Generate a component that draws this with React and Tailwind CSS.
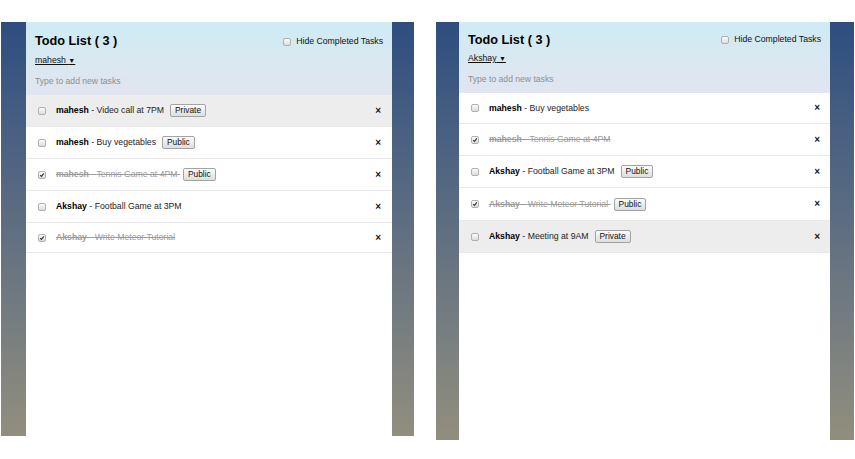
import React from "react";

function Box({ checked }) {
  return (
    <span className="inline-flex w-[8px] h-[8px] shrink-0 rounded-[2px] border border-[#b0b0b0] bg-linear-to-b from-[#fdfdfd] to-[#dcdcdc] items-center justify-center">
      {checked && (
        <svg width="8" height="8" viewBox="0 0 8 8" className="block">
          <path d="M1.6 4.2 L3.3 5.9 L6.4 1.8" fill="none" stroke="#333" strokeWidth="1.5" />
        </svg>
      )}
    </span>
  );
}

function Btn({ children }) {
  return (
    <span className="ml-[6px] inline-flex h-[13px] items-center px-[4px] rounded-[2px] border border-[#a3a3a3] bg-linear-to-b from-[#fbfbfb] to-[#dedede] text-[8.4px] leading-[11px] text-[#111]">
      {children}
    </span>
  );
}

function Row({ name, task, done, btn, gray, h, pr }) {
  return (
    <div
      className={
        "flex items-center border-b border-[#e9e9e9] pl-[12px] " +
        (gray ? "bg-[#ededed] " : "bg-white ")
      }
      style={{ height: h, paddingRight: pr }}
    >
      <Box checked={done} />
      <div className="ml-[10px] flex items-center flex-1 text-[8.7px] leading-[11px]">
        {done ? (
          <span className="text-[#9c9c9c] line-through decoration-[#9c9c9c]">
            <b className="font-bold">{name}</b> - {task}
            {btn ? "\u00a0" : ""}
          </span>
        ) : (
          <span className="text-[#1c1c1c]">
            <b className="font-bold text-black">{name}</b> - {task}
          </span>
        )}
        {btn && (done ? <span className="-ml-[3px]"><Btn>{btn}</Btn></span> : <Btn>{btn}</Btn>)}
      </div>
      <span className="text-[10px] leading-[10px] font-bold text-[#1a1a1a]">×</span>
    </div>
  );
}

function Panel({ user, rows, headerH, titleMt, userMt, hideMt, pr }) {
  return (
    <div className="flex-1 flex flex-col bg-white">
      <div
        className="flex flex-col px-[9px] bg-linear-to-b from-[#cfebf4] to-[#e1e5ef]"
        style={{ height: headerH }}
      >
        <div className="flex justify-between items-start" style={{ marginTop: titleMt }}>
          <div className="text-[12.7px] leading-[15px] font-bold text-black">Todo List ( 3 )</div>
          <div className="flex items-center text-[8.7px] leading-[11px] text-[#111]" style={{ marginTop: hideMt }}>
            <Box />
            <span className="ml-[5px]">Hide Completed Tasks</span>
          </div>
        </div>
        <div className="flex" style={{ marginTop: userMt }}>
          <span className="text-[8.7px] leading-[11px] text-[#111] underline">
            {user} <span className="text-[7px]">▼</span>
          </span>
        </div>
        <div className="mt-[10px] text-[8.6px] leading-[11px] text-[#8e8e8e]">Type to add new tasks</div>
      </div>
      {rows.map((r, i) => (
        <Row key={i} {...r} pr={pr} />
      ))}
    </div>
  );
}

export default function App() {
  const leftRows = [
    { name: "mahesh", task: "Video call at 7PM", btn: "Private", gray: true, h: 32 },
    { name: "mahesh", task: "Buy vegetables", btn: "Public", h: 32 },
    { name: "mahesh", task: "Tennis Game at 4PM", btn: "Public", done: true, h: 32 },
    { name: "Akshay", task: "Football Game at 3PM", h: 32 },
    { name: "Akshay", task: "Write Meteor Tutorial", done: true, h: 30 },
  ];
  const rightRows = [
    { name: "mahesh", task: "Buy vegetables", h: 31 },
    { name: "mahesh", task: "Tennis Game at 4PM", done: true, h: 32 },
    { name: "Akshay", task: "Football Game at 3PM", btn: "Public", h: 32 },
    { name: "Akshay", task: "Write Meteor Tutorial", btn: "Public", done: true, h: 33 },
    { name: "Akshay", task: "Meeting at 9AM", btn: "Private", gray: true, h: 32 },
  ];
  return (
    <div className="w-[855px] h-[459px] bg-white flex items-start pt-[22px] pl-[1px] font-['Liberation_Sans',Arial,sans-serif]">
      <div className="w-[413px] h-[414px] flex pl-[25px] pr-[22px] bg-linear-to-b from-[#2e4e80] to-[#928e7d]">
        <Panel user="mahesh" rows={leftRows} headerH={73} titleMt={12} userMt={6} hideMt={2} pr={11} />
      </div>
      <div className="ml-[22px] w-[418px] h-[418px] flex pl-[23px] pr-[24px] bg-linear-to-b from-[#2e4e80] to-[#928e7d]">
        <Panel user="Akshay" rows={rightRows} headerH={71} titleMt={11} userMt={5} hideMt={1} pr={10} />
      </div>
    </div>
  );
}
